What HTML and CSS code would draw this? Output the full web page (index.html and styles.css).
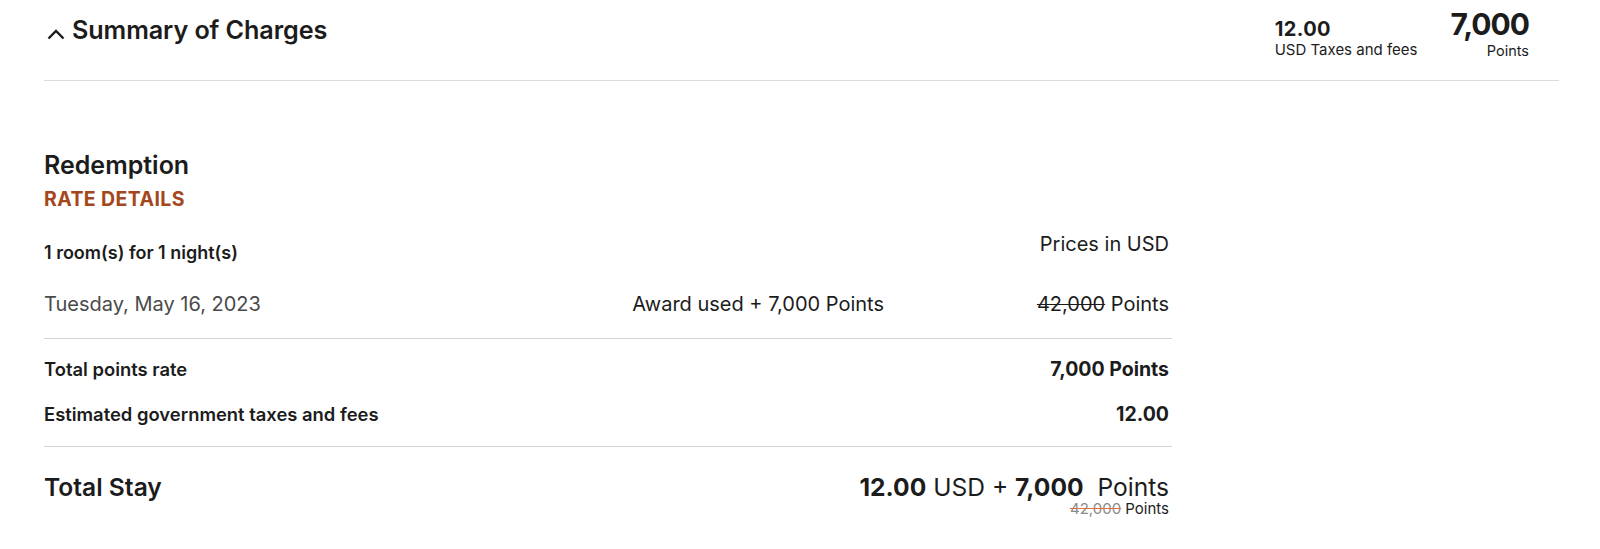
FILE: index.html
```html
<!DOCTYPE html>
<html>
<head>
<meta charset="utf-8">
<link rel="stylesheet" href="styles.css">
</head>
<body>
<div class="page">
  <header class="summary-header">
    <h2 class="summary-title">
      <svg class="chevron" width="18" height="12" viewBox="0 0 18 12"><path d="M1.5 10.5 L9 3 L16.5 10.5" fill="none" stroke="#1a1a1a" stroke-width="2.4"/></svg>
      Summary of Charges
    </h2>
    <div class="totals">
      <div class="total total-tax">
        <div class="total-amt">12.00</div>
        <div class="total-lbl">USD Taxes and fees</div>
      </div>
      <div class="total total-pts">
        <div class="total-amt big">7,000</div>
        <div class="total-lbl">Points</div>
      </div>
    </div>
  </header>

  <section class="details">
    <h3 class="rate-name">Redemption</h3>
    <div class="rate-label">RATE DETAILS</div>

    <div class="room-row">
      <span class="room-count">1 room(s) for 1 night(s)</span>
      <span class="currency">Prices in USD</span>
    </div>

    <div class="night-row">
      <span class="date">Tuesday, May 16, 2023</span>
      <span class="award">Award used + 7,000 Points</span>
      <span class="price"><s>42,000</s> Points</span>
    </div>

    <div class="sum-block">
      <div class="sum-row">
        <span>Total points rate</span>
        <span class="sum-val">7,000 Points</span>
      </div>
      <div class="sum-row">
        <span>Estimated government taxes and fees</span>
        <span class="sum-val">12.00</span>
      </div>
    </div>

    <div class="total-row">
      <span class="total-stay">Total Stay</span>
      <div class="total-stay-val">
        <div class="grand"><b>12.00</b> USD + <b>7,000</b>&nbsp; Points</div>
        <div class="was"><s>42,000</s> Points</div>
      </div>
    </div>
  </section>
</div>
</body>
</html>
```

FILE: styles.css
```css
* { box-sizing: border-box; }
html, body { margin: 0; padding: 0; background: #fff; }
body {
  font-family: "Inter", "Liberation Sans", sans-serif;
  color: #1c1c1c;
}
.page {
  padding: 0 41px 0 44px;
}
.summary-header {
  display: flex;
  justify-content: space-between;
  align-items: flex-start;
  height: 81px;
  border-bottom: 1px solid #dcdcdc;
}
.summary-title {
  margin: 14px 0 0 3px;
  font-size: 25.2px;
  font-weight: 600;
  letter-spacing: -0.1px;
  line-height: 32px;
  display: flex;
  align-items: center;
  gap: 7px;
}
.chevron { margin-top: 8px; }
.totals {
  display: flex;
  align-items: flex-start;
  gap: 33px;
  margin-right: 30px;
}
.total { display: flex; flex-direction: column; }
.total-tax { padding-top: 17px; }
.total-pts { align-items: flex-end; padding-top: 8px; }
.total-amt { font-size: 20px; font-weight: 700; line-height: 24px; letter-spacing: 0.4px; }
.total-amt.big { font-size: 30px; line-height: 32px; letter-spacing: -1px; }
.total-lbl { font-size: 15px; line-height: 18px; }
.total-pts .total-lbl { margin-top: 2px; font-size: 14.5px; }

.details {
  width: 1128px;
  padding-top: 69px;
}
.rate-name {
  margin: 0;
  font-size: 25px;
  font-weight: 600;
  line-height: 30px;
}
.rate-label {
  margin-top: 7px;
  color: #a4471c;
  font-size: 19.5px;
  font-weight: 700;
  letter-spacing: 0.4px;
  line-height: 24px;
}
.room-row {
  display: flex;
  justify-content: space-between;
  align-items: flex-start;
  padding-right: 3px;
  margin-top: 21px;
}
.room-count {
  margin-top: 10px;
  font-size: 18px;
  font-weight: 600;
  line-height: 22px;
}
.currency { font-size: 20px; line-height: 24px; }
.night-row {
  display: grid;
  grid-template-columns: 1fr auto 285px;
  align-items: baseline;
  padding: 28px 3px 22px 0;
  border-bottom: 1px solid #d4d4d4;
  font-size: 20px;
  line-height: 24px;
}
.date { color: #4a4a4a; }
.price { text-align: right; }
.price s { text-decoration-thickness: 1px; }
.sum-block {
  padding: 18px 3px 20px 0;
  border-bottom: 1px solid #d4d4d4;
}
.sum-row {
  display: flex;
  justify-content: space-between;
  align-items: baseline;
  font-size: 18.4px;
  font-weight: 600;
  line-height: 24px;
}
.sum-row + .sum-row { padding-top: 21px; }
.sum-val { font-size: 19.5px; font-weight: 700; }
.total-row {
  display: flex;
  justify-content: space-between;
  align-items: flex-start;
  padding: 25px 3px 0 0;
}
.total-stay { font-size: 24.6px; font-weight: 600; line-height: 30px; }
.total-stay-val { text-align: right; }
.grand { font-size: 24.6px; line-height: 26px; padding-top: 2px; }
.grand b { font-weight: 700; }
.was { font-size: 15px; line-height: 18px; }
.was s { color: #8a8a8a; text-decoration-color: #e0713d; }
```
